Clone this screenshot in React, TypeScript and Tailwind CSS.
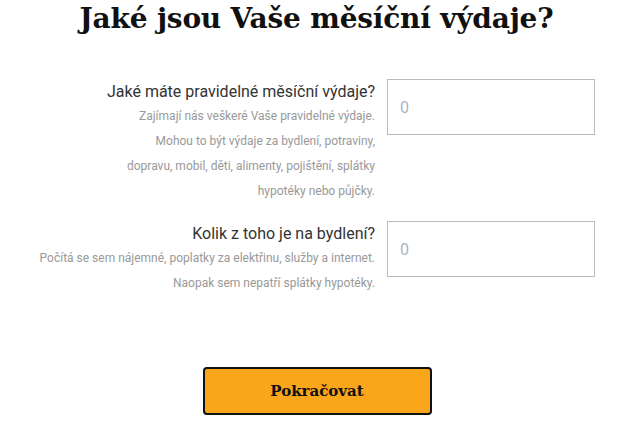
export default function App() {
  return (
    <div className="min-h-[445px] bg-white font-['Roboto',sans-serif]">
      <h1 className="pl-[14px] pt-[2px] text-center font-['DejaVu_Serif',serif] text-[28px] font-bold leading-[34px] tracking-[-0.2px] text-[#111]">
        Jaké jsou Vaše měsíční výdaje?
      </h1>

      <div className="mx-auto mt-[43px] flex w-[571px] flex-col gap-[17px]">
        <div className="flex gap-3">
          <div className="w-[351px] text-right">
            <div className="pt-[1px] text-[16px] leading-[24px] text-[#333]">Jaké máte pravidelné měsíční výdaje?</div>
            <div className="text-[12px] leading-[25px] text-[#999]">
              Zajímají nás veškeré Vaše pravidelné výdaje.
              <br />
              Mohou to být výdaje za bydlení, potraviny,
              <br />
              dopravu, mobil, děti, alimenty, pojištění, splátky
              <br />
              hypotéky nebo půjčky.
            </div>
          </div>
          <input
            placeholder="0"
            className="h-[56px] w-[208px] border border-[#bbb] px-3 text-[16px] text-[#333] outline-none placeholder:text-[#a7b6c6]"
          />
        </div>

        <div className="flex gap-3">
          <div className="w-[351px] text-right">
            <div className="pt-[1px] text-[16px] leading-[24px] text-[#333]">Kolik z toho je na bydlení?</div>
            <div className="text-[12px] leading-[25px] text-[#999]">
              Počítá se sem nájemné, poplatky za elektřinu, služby a internet.
              <br />
              Naopak sem nepatří splátky hypotéky.
            </div>
          </div>
          <input
            placeholder="0"
            className="h-[56px] w-[208px] border border-[#bbb] px-3 text-[16px] text-[#333] outline-none placeholder:text-[#a7b6c6]"
          />
        </div>
      </div>

      <div className="mt-[71px] flex justify-center pl-[15px]">
        <button className="h-[48px] w-[229px] rounded-[4px] border-2 border-[#111] bg-[#f9a61a] font-['DejaVu_Serif',serif] text-[15px] font-bold text-[#111]">
          Pokračovat
        </button>
      </div>
    </div>
  );
}
